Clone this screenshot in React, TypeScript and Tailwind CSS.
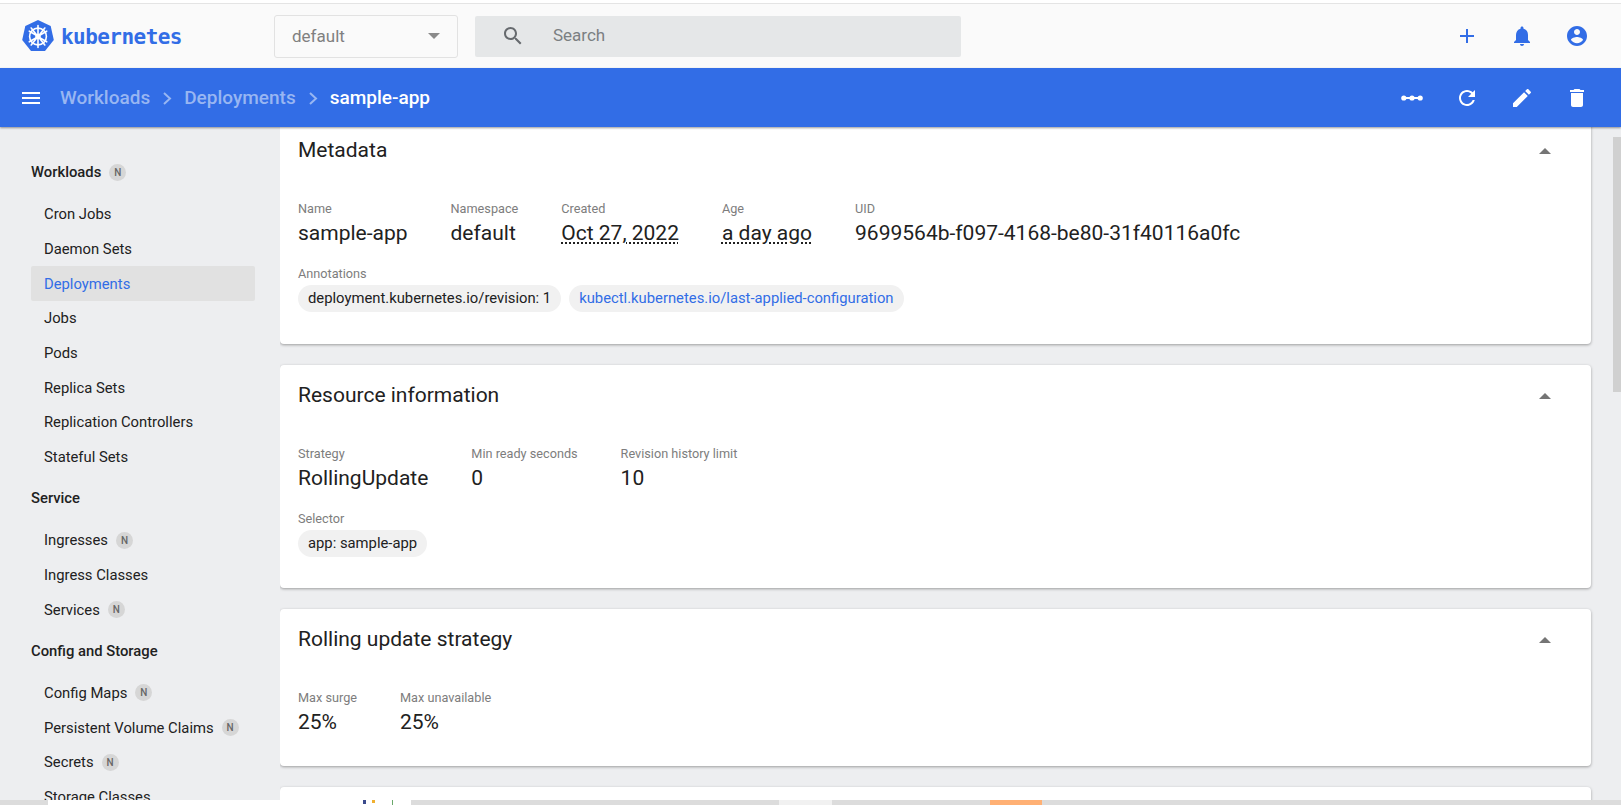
interface NavItem {
  label: string;
  isNew?: boolean;
  active?: boolean;
}

const workloads: NavItem[] = [
  { label: 'Cron Jobs' },
  { label: 'Daemon Sets' },
  { label: 'Deployments', active: true },
  { label: 'Jobs' },
  { label: 'Pods' },
  { label: 'Replica Sets' },
  { label: 'Replication Controllers' },
  { label: 'Stateful Sets' },
];

const service: NavItem[] = [
  { label: 'Ingresses', isNew: true },
  { label: 'Ingress Classes' },
  { label: 'Services', isNew: true },
];

const configStorage: NavItem[] = [
  { label: 'Config Maps', isNew: true },
  { label: 'Persistent Volume Claims', isNew: true },
  { label: 'Secrets', isNew: true },
  { label: 'Storage Classes' },
];

// Material icon paths, same set the dashboard uses
const icons = {
  search:
    'M15.5 14h-.79l-.28-.27C15.41 12.59 16 11.11 16 9.5 16 5.91 13.09 3 9.5 3S3 5.91 3 9.5 5.91 16 9.5 16c1.61 0 3.09-.59 4.23-1.57l.27.28v.79l5 4.99L20.49 19l-4.99-5zm-6 0C7.01 14 5 11.99 5 9.5S7.01 5 9.5 5 14 7.01 14 9.5 11.99 14 9.5 14z',
  add: 'M19 13h-6v6h-2v-6H5v-2h6V5h2v6h6v2z',
  bell: 'M12 22c1.1 0 2-.9 2-2h-4c0 1.1.9 2 2 2zm6-6v-5c0-3.07-1.63-5.64-4.5-6.32V4c0-.83-.67-1.5-1.5-1.5s-1.5.67-1.5 1.5v.68C7.64 5.36 6 7.92 6 11v5l-2 2v1h16v-1l-2-2z',
  account:
    'M12 2C6.48 2 2 6.48 2 12s4.48 10 10 10 10-4.48 10-10S17.52 2 12 2zm0 3c1.66 0 3 1.34 3 3s-1.34 3-3 3-3-1.34-3-3 1.34-3 3-3zm0 14.2c-2.5 0-4.71-1.28-6-3.22.03-1.99 4-3.08 6-3.08 1.99 0 5.97 1.09 6 3.08-1.29 1.94-3.5 3.22-6 3.22z',
  menu: 'M3 18h18v-2H3v2zm0-5h18v-2H3v2zm0-7v2h18V6H3z',
  refresh:
    'M17.65 6.35C16.2 4.9 14.21 4 12 4c-4.42 0-7.99 3.58-7.99 8s3.57 8 7.99 8c3.73 0 6.84-2.55 7.73-6h-2.08c-.82 2.33-3.04 4-5.65 4-3.31 0-6-2.69-6-6s2.69-6 6-6c1.66 0 3.14.69 4.22 1.78L13 11h7V4l-2.35 2.35z',
  edit: 'M3 17.25V21h3.75L17.81 9.94l-3.75-3.75L3 17.25zM20.71 7.04c.39-.39.39-1.02 0-1.41l-2.34-2.34c-.39-.39-1.02-.39-1.41 0l-1.83 1.83 3.75 3.75 1.83-1.83z',
  trash: 'M6 19c0 1.1.9 2 2 2h8c1.1 0 2-.9 2-2V7H6v12zM19 4h-3.5l-1-1h-5l-1 1H5v2h14V4z',
};

function Icon({ d, className }: { d: string; className?: string }) {
  return (
    <svg width="24" height="24" viewBox="0 0 24 24" fill="currentColor" className={className}>
      <path d={d} />
    </svg>
  );
}

function NBadge() {
  return (
    <span className="ml-[8px] flex h-[17px] w-[17px] items-center justify-center rounded-full bg-[#d6d6d6] text-[10px] font-medium text-[#666]">
      N
    </span>
  );
}

function NavSection({ title, items, isNew }: { title: string; items: NavItem[]; isNew?: boolean }) {
  return (
    <div className="mb-[6.5px]">
      <div className="flex h-[35px] items-center text-[14.8px] font-medium text-[#212121]">
        {title}
        {isNew && <NBadge />}
      </div>
      <div className="mt-[7px]">
        {items.map((item) => (
          <div
            key={item.label}
            className={`flex h-[34.7px] items-center rounded-[2px] pl-[13px] text-[14.8px] ${
              item.active ? 'bg-[#e1e1e1] text-[#326de6]' : 'text-[#212121]'
            }`}
          >
            {item.label}
            {item.isNew && <NBadge />}
          </div>
        ))}
      </div>
    </div>
  );
}

function Field({ label, value, dotted }: { label: string; value: string; dotted?: boolean }) {
  return (
    <div>
      <div className="text-[12.7px] leading-[16px] text-[#7d7d7d]">{label}</div>
      <div
        className={`mt-[3px] w-fit text-[21px] leading-[26px] text-[#212121] ${
          dotted ? 'underline decoration-dotted decoration-[#212121] decoration-2 underline-offset-2' : ''
        }`}
      >
        {value}
      </div>
    </div>
  );
}

function Chip({ children, link }: { children: string; link?: boolean }) {
  return (
    <span
      className={`flex h-[27px] items-center rounded-full bg-[#f1f1f1] px-[10px] text-[14.8px] ${
        link ? 'text-[#326de6]' : 'text-[#212121]'
      }`}
    >
      {children}
    </span>
  );
}

function Card({ title, height, children }: { title: string; height: string; children?: React.ReactNode }) {
  return (
    <section className={`mb-[21px] rounded-[4px] bg-white shadow-[0_1px_3px_rgba(0,0,0,0.35)] ${height}`}>
      <div className="flex h-[62px] items-center justify-between pl-[18px] pr-[40px] text-[21px] text-[#212121]">
        {title}
        <svg width="12" height="6" viewBox="0 0 12 6">
          <path d="M0 6 6 0l6 6z" fill="#757575" />
        </svg>
      </div>
      <div className="px-[18px] pt-[19px]">{children}</div>
    </section>
  );
}

function KubeLogo() {
  return (
    <svg width="32" height="32" viewBox="0 0 32 32">
      <path d="M16 0 28.7 6.1 31.8 19.9 23 31 9 31 .2 19.9 3.3 6.1z" fill="#326de6" />
      <g stroke="#fff" strokeWidth="1.6" fill="none" strokeLinecap="round">
        <circle cx="16" cy="16.5" r="8.4" />
        <circle cx="16" cy="16.5" r="2" fill="#fff" />
        <path d="M16 5.5v9M16 18.5v9M7.3 11.2l7 4M17.7 17.8l7 4M24.7 11.2l-7 4M14.3 17.8l-7 4M9.2 25l5.5-7M17.3 15l5.5-7M22.8 25l-5.5-7M14.7 15 9.2 8" />
      </g>
    </svg>
  );
}

function Crumb() {
  return (
    <svg width="10" height="13" viewBox="0 0 10 13" className="mx-[12px]" fill="none" stroke="#98b6f2" strokeWidth="2">
      <path d="M2 1l6 5.5L2 12" />
    </svg>
  );
}

export default function App() {
  return (
    <div className="flex h-[805px] w-[1621px] flex-col overflow-hidden bg-[#edeef0] font-['Roboto',sans-serif]">
      <div className="h-[4px] border-b border-[#e4e4e4] bg-white" />

      {/* Toolbar */}
      <header className="flex h-[64px] items-center bg-[#fafafa] pl-[22px] pr-[32px]">
        <div className="flex w-[252px] items-center gap-[7px]">
          <KubeLogo />
          <span className="mt-[3px] font-['DejaVu_Sans_Mono',monospace] text-[21px] font-bold tracking-[-0.55px] text-[#326de6]">
            kubernetes
          </span>
        </div>
        <div className="flex h-[43px] w-[184px] items-center justify-between rounded-[3px] border border-[#e2e2e2] pl-[17px] pr-[17px] text-[17px] text-[#808080]">
          <span className="mt-[1px]">default</span>
          <svg width="12" height="6" viewBox="0 0 12 6">
            <path d="M0 0h12L6 6z" fill="#8a8a8a" />
          </svg>
        </div>
        <div className="ml-[17px] flex h-[41px] w-[486px] items-center rounded-[2px] bg-[#e5e7e8] pl-[26px] text-[17px] text-[#7b7f82]">
          <Icon d={icons.search} className="text-[#666a6e]" />
          <span className="ml-[28px]">Search</span>
        </div>
        <div className="ml-auto flex items-center gap-[31px] text-[#326de6]">
          <Icon d={icons.add} />
          <Icon d={icons.bell} />
          <Icon d={icons.account} />
        </div>
      </header>

      {/* Action bar */}
      <div className="relative z-10 flex h-[59px] items-center bg-[#326de6] pl-[19px] pr-[32px] shadow-[0_1px_2px_rgba(0,0,0,0.4)]">
        <Icon d={icons.menu} className="text-white" />
        <nav className="ml-[17px] mt-[1px] flex items-center text-[19px] font-medium">
          <span className="text-[#98b6f2]">Workloads</span>
          <Crumb />
          <span className="text-[#98b6f2]">Deployments</span>
          <Crumb />
          <span className="text-white">sample-app</span>
        </nav>
        <div className="ml-auto flex items-center gap-[31px] text-white">
          <svg width="24" height="24" viewBox="0 0 24 24" fill="currentColor">
            <rect x="2" y="11" width="20" height="2" />
            <circle cx="3.8" cy="12" r="2.6" />
            <circle cx="12" cy="12" r="2.6" />
            <circle cx="20.2" cy="12" r="2.6" />
          </svg>
          <Icon d={icons.refresh} />
          <Icon d={icons.edit} />
          <Icon d={icons.trash} />
        </div>
      </div>

      <div className="flex min-h-0 flex-1">
        {/* Sidebar */}
        <aside className="w-[280px] shrink-0 overflow-hidden pl-[31px] pr-[25px] pt-[28px]">
          <NavSection title="Workloads" items={workloads} isNew />
          <NavSection title="Service" items={service} />
          <NavSection title="Config and Storage" items={configStorage} />
        </aside>

        {/* Content */}
        <main className="min-w-0 flex-1 overflow-hidden pr-[22px]">
          <div className="-mt-[7px]">
            <Card title="Metadata" height="h-[224px]">
              <div className="flex gap-[43px]">
                <Field label="Name" value="sample-app" />
                <Field label="Namespace" value="default" />
                <Field label="Created" value="Oct 27, 2022" dotted />
                <Field label="Age" value="a day ago" dotted />
                <Field label="UID" value="9699564b-f097-4168-be80-31f40116a0fc" />
              </div>
              <div className="mt-[20px] text-[12.7px] leading-[16px] text-[#7d7d7d]">Annotations</div>
              <div className="mt-[3px] flex gap-[8px]">
                <Chip>deployment.kubernetes.io/revision: 1</Chip>
                <Chip link>kubectl.kubernetes.io/last-applied-configuration</Chip>
              </div>
            </Card>
            <Card title="Resource information" height="h-[223px]">
              <div className="flex gap-[43px]">
                <Field label="Strategy" value="RollingUpdate" />
                <Field label="Min ready seconds" value="0" />
                <Field label="Revision history limit" value="10" />
              </div>
              <div className="mt-[20px] text-[12.7px] leading-[16px] text-[#7d7d7d]">Selector</div>
              <div className="mt-[3px] flex">
                <Chip>app: sample-app</Chip>
              </div>
            </Card>
            <Card title="Rolling update strategy" height="h-[157px]">
              <div className="flex gap-[43px]">
                <Field label="Max surge" value="25%" />
                <Field label="Max unavailable" value="25%" />
              </div>
            </Card>
            <Card title="" height="h-[60px]" />
          </div>
        </main>

        {/* Scrollbar */}
        <div className="w-[8px] shrink-0 pt-[10px]">
          <div className="h-[255px] bg-[#d0d0d0]" />
        </div>
      </div>

      {/* Window edge */}
      <div className="flex h-[5px] shrink-0 bg-[#dcdcdc]">
        <div className="ml-[48px] flex w-[363px] items-start justify-end gap-[6px] bg-white pr-[18px]">
          <span className="h-[4px] w-[3px] bg-[#3b4a8c]" />
          <span className="h-[3px] w-[3px] bg-[#f0b030]" />
          <span className="ml-[11px] h-[5px] w-[1px] bg-[#6aa86a]" />
        </div>
        <div className="ml-[368px] w-[53px] bg-[#f1f1f1]" />
        <div className="ml-[158px] w-[52px] bg-[#ffb074]" />
      </div>
    </div>
  );
}
